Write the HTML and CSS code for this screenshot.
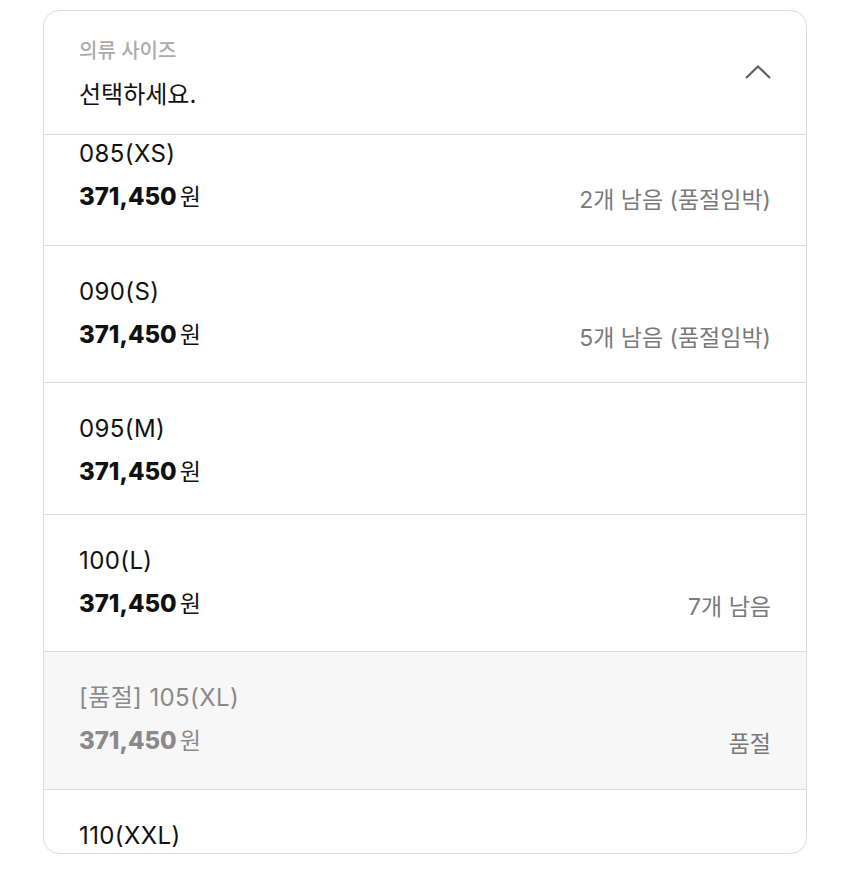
FILE: index.html
```html
<!DOCTYPE html>
<html lang="ko">

<head>
    <meta charset="UTF-8">
    <meta name="viewport" content="width=device-width, initial-scale=1.0">
    <title>의류 사이즈</title>

    <link rel="stylesheet" href="styles.css">
</head>

<body>
    <div class="select">
        <div class="select-head">
            <div>
                <div class="select-label">의류 사이즈</div>
                <div class="select-value">선택하세요.</div>
            </div>
            <svg class="chevron" width="28" height="16" viewBox="0 0 28 16">
                <path d="M2 14 L14 2.5 L26 14" fill="none" stroke="#5f5f5f" stroke-width="2.2" />
            </svg>
        </div>
        <div class="option-list">
            <div class="options">
                <div class="option">
                    <div class="option-name">085(XS)</div>
                    <div class="option-row">
                        <div class="price"><b>371,450</b>원</div>
                        <div class="stock">2개 남음 (품절임박)</div>
                    </div>
                </div>
                <div class="option">
                    <div class="option-name">090(S)</div>
                    <div class="option-row">
                        <div class="price"><b>371,450</b>원</div>
                        <div class="stock">5개 남음 (품절임박)</div>
                    </div>
                </div>
                <div class="option">
                    <div class="option-name">095(M)</div>
                    <div class="option-row">
                        <div class="price"><b>371,450</b>원</div>
                    </div>
                </div>
                <div class="option">
                    <div class="option-name">100(L)</div>
                    <div class="option-row">
                        <div class="price"><b>371,450</b>원</div>
                        <div class="stock">7개 남음</div>
                    </div>
                </div>
                <div class="option soldout">
                    <div class="option-name">[품절] 105(XL)</div>
                    <div class="option-row">
                        <div class="price"><b>371,450</b>원</div>
                        <div class="stock">품절</div>
                    </div>
                </div>
                <div class="option">
                    <div class="option-name">110(XXL)</div>
                </div>
            </div>
        </div>
    </div>
</body>

</html>
```

FILE: styles.css
```css
body {
    margin: 0;
    padding: 10px 43px 0;
    background-color: white;
    font-family: Inter, "Noto Sans CJK KR", sans-serif;
    color: #111;
}

.select {
    width: 762px;
    border: 1.5px solid #dcdcdc;
    border-radius: 16px;
    overflow: hidden;
}

.select-head {
    height: 124px;
    box-sizing: border-box;
    padding: 28px 34px 0 35px;
    border-bottom: 1.5px solid #dcdcdc;
    display: flex;
    justify-content: space-between;
    align-items: flex-start;
}

.select-label {
    font-size: 20px;
    line-height: 24px;
    color: #ababab;
    font-weight: 500;
}

.select-value {
    margin-top: 17px;
    font-size: 24px;
    line-height: 30px;
}

.chevron {
    margin-top: 25px;
}

.option-list {
    height: 718px;
    overflow: hidden;
}

.options {
    margin-top: -27px;
}

.option {
    padding: 32px 35px 27.5px;
    border-bottom: 1.5px solid #dcdcdc;
}

.option-name {
    font-size: 24px;
    line-height: 28px;
    letter-spacing: 0.4px;
}

.option-row {
    margin-top: 15px;
    display: flex;
    justify-content: space-between;
    align-items: flex-start;
}

.price {
    font-size: 23px;
    line-height: 28px;
}

.price>b {
    font-size: 24px;
    font-weight: 800;
    margin-right: 3px;
}

.stock {
    font-size: 23px;
    line-height: 34px;
    color: #7a7a7a;
}

.soldout {
    background-color: #f7f7f7;
    color: #8a8a8a;
}
```
